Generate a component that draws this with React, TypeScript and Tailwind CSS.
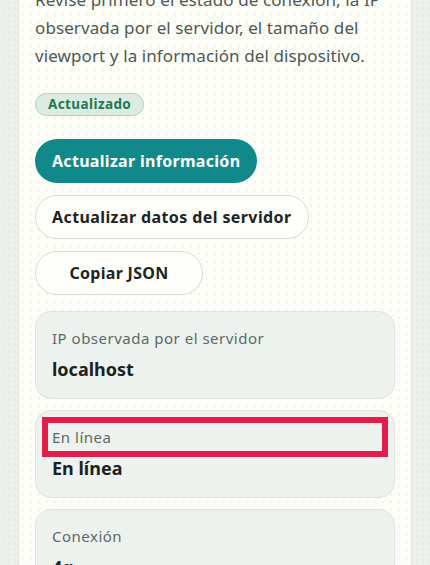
import React from 'react';

interface InfoItem {
  label: string;
  value: string;
  highlight?: boolean;
}

const ITEMS: InfoItem[] = [
  { label: 'IP observada por el servidor', value: 'localhost' },
  { label: 'En línea', value: 'En línea', highlight: true },
  { label: 'Conexión', value: '4g' },
];

function InfoCard({ item }: { item: InfoItem }): React.ReactElement {
  return (
    <div className="rounded-[16px] border border-[#dfe3dc] bg-[#eef2ef] p-4">
      <div
        className={
          item.highlight
            ? 'text-[15px] leading-[20px] tracking-[0.5px] text-[#5b6a65] outline-[6px] outline-solid outline-offset-4 outline-[#e31c4c]'
            : 'text-[15px] leading-[20px] tracking-[0.5px] text-[#5b6a65]'
        }
      >
        {item.label}
      </div>
      <div className="mt-2 text-[18px] font-bold leading-[26px] text-[#1b2220]">{item.value}</div>
    </div>
  );
}

export default function App(): React.ReactElement {
  return (
    <div
      className="h-[565px] overflow-hidden bg-[#ecf0ec] bg-[radial-gradient(circle,#e4eae5_0.8px,transparent_1px)] bg-size-[6px_6px] px-[18px]"
      style={{ fontFamily: '"Noto Sans", "Liberation Sans", sans-serif' }}
    >
      <div className="-mt-[14px] border-x border-[#e2e5dd] bg-[#fdfdf8] bg-[radial-gradient(circle,#f1f0e9_0.8px,transparent_1px)] bg-size-[8px_8px] px-4 pb-6">
        <p className="text-[17px] leading-[28px] tracking-[0.1px] text-[#4c5955]">
          Revise primero el estado de conexión, la IP observada por el servidor, el tamaño del viewport y la
          información del dispositivo.
        </p>

        <div className="mt-[23px] flex">
          <span className="flex h-[23px] items-center rounded-full border border-[#a9d5bf] bg-[#dcece3] px-[12px] text-[13.5px] font-bold tracking-[0.4px] text-[#1f7a50]">
            Actualizado
          </span>
        </div>

        <div className="mt-[23px] flex flex-col items-start gap-3">
          <button className="h-[44px] rounded-full bg-[#11888a] px-[17px] text-[16px] font-bold tracking-[0.3px] text-white">
            Actualizar información
          </button>
          <button className="h-[44px] rounded-full border border-[#dcdcd4] bg-[#fefefb] px-4 text-[16px] font-bold tracking-[0.4px] text-[#1d2422]">
            Actualizar datos del servidor
          </button>
          <button className="h-[44px] min-w-[168px] rounded-full border border-[#dcdcd4] bg-[#fefefb] px-8 text-[16px] font-bold tracking-[0.3px] text-[#1d2422]">
            Copiar JSON
          </button>
        </div>

        <div className="mt-4 flex flex-col gap-[11px]">
          {ITEMS.map((item) => (
            <InfoCard key={item.label} item={item} />
          ))}
        </div>
      </div>
    </div>
  );
}
